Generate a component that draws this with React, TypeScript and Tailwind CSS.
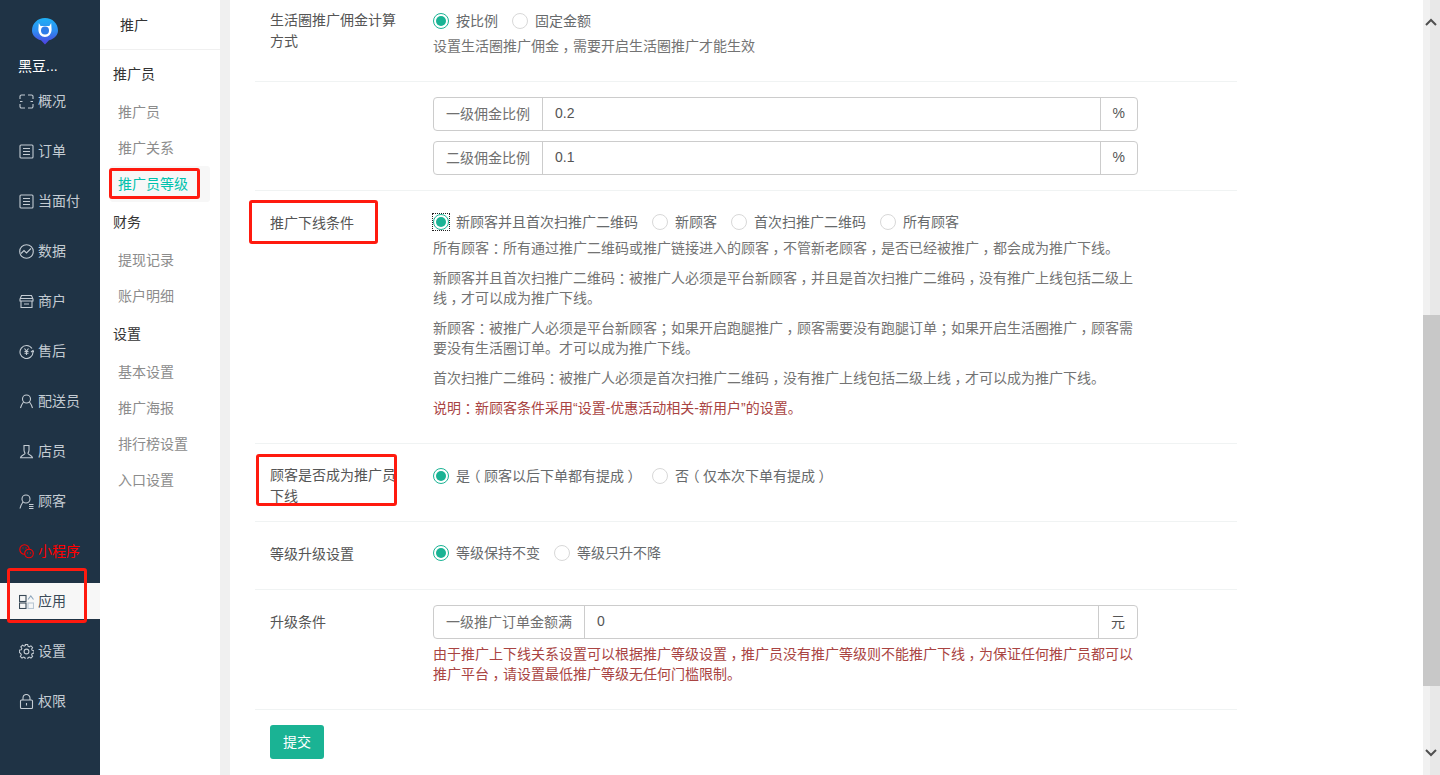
import React from "react";

const font = { fontFamily: '"Liberation Sans","Noto Sans CJK SC",sans-serif' };

// Full-width punctuation sits in the middle of its cell in the reference's font.
function P({ t }: { t: string }) {
  const parts = t.split(/([，：；（）])/);
  return (
    <>
      {parts.map((s, i) =>
        /^[，：；（）]$/.test(s) ? (
          <span key={i} className="inline-block w-[14px] text-center [font-feature-settings:'halt']">{s}</span>
        ) : (
          <React.Fragment key={i}>{s}</React.Fragment>
        )
      )}
    </>
  );
}

type IconProps = { c?: string };
const Svg = ({ children, c = "currentColor" }: { children: React.ReactNode; c?: string }) => (
  <svg width="15" height="15" viewBox="0 0 15 15" fill="none" stroke={c} strokeWidth="1.1" className="shrink-0">
    {children}
  </svg>
);
const icons: Record<string, (p: IconProps) => React.ReactElement> = {
  overview: (p) => (
    <Svg {...p}>
      <path d="M1 5V2.500A1.500 1.500 0 0 1 2.500 1H6M9 1h3.500A1.500 1.500 0 0 1 14 2.500V5M1 10v2.500A1.500 1.500 0 0 0 2.500 14H6M9 14h3.500a1.500 1.500 0 0 0 1.500-1.500V10M1 7.500h2.500M11.500 7.500H14" />
    </Svg>
  ),
  order: (p) => (
    <Svg {...p}>
      <rect x="1" y="1" width="13" height="13" rx="1" />
      <path d="M4 4.500h7M4 7.500h7M4 10.500h7" />
    </Svg>
  ),
  data: (p) => (
    <Svg {...p}>
      <circle cx="7.500" cy="7.500" r="6.800" />
      <path d="M2 9.500l3-3 2.500 2.500L12 4.500" />
    </Svg>
  ),
  shop: (p) => (
    <Svg {...p}>
      <path d="M2.500 1.500h10L14 5v2H1V5zM2 7v6.500h11V7M1 4.500h13M5 10h5" />
    </Svg>
  ),
  after: (p) => (
    <Svg {...p}>
      <path d="M13 4.500A6.500 6.500 0 1 0 14 7.500M12 8l2-1.500L15 8" />
      <path d="M5.500 4.500l2 2.500 2-2.500M7.500 7v4M5.500 7.500h4M5.500 9.300h4" />
    </Svg>
  ),
  courier: (p) => (
    <Svg {...p}>
      <circle cx="7.500" cy="5" r="4" />
      <path d="M4.500 8C3 10 2 12 1.500 14M10.500 8c1.500 2 2.500 4 3 6" />
    </Svg>
  ),
  staff: (p) => (
    <Svg {...p}>
      <path d="M5 1.500h5v4.500C10 8 9 8.500 9 9.500S13.500 11.500 13.500 13.800H1.500C1.500 11.500 6 10.500 6 9.500S5 8 5 6z" />
    </Svg>
  ),
  customer: (p) => (
    <Svg {...p}>
      <circle cx="7" cy="5" r="4" />
      <path d="M4 8C2.500 10 1.500 12 1 14.500M10 10.500h4.500M10 12.500h4.500M10 14.500h4.500" />
    </Svg>
  ),
  mini: (p) => (
    <Svg {...p}>
      <circle cx="5.500" cy="5.500" r="4.700" />
      <circle cx="10" cy="9.500" r="4.300" fill="#1f3345" />
      <path d="M3.500 4h1M6.500 4h1M8.500 8.500v1M11.500 8.500v1" />
    </Svg>
  ),
  app: (p) => (
    <Svg {...p}>
      <rect x=".5" y="1.500" width="6.500" height="6" />
      <rect x=".5" y="9" width="6.500" height="5.500" />
      <rect x="9" y="9" width="5.500" height="5.500" stroke="#b9c7d4" />
      <path d="M9 5.500l2.800-3.500 2.700 3.500" stroke="#8ea6bc" />
    </Svg>
  ),
  setting: (p) => (
    <Svg {...p}>
      <circle cx="7.500" cy="7.500" r="2.400" />
      <path d="M6.300 .8h2.400l.4 1.900 1.300.6 1.700-1 1.700 1.700-1 1.700.6 1.300 1.900.4v2.400l-1.900.4-.6 1.300 1 1.700-1.700 1.700-1.700-1-1.300.6-.4 1.900H6.300l-.4-1.900-1.300-.6-1.700 1-1.700-1.700 1-1.700-.6-1.300L.2 9V6.700l1.900-.4.6-1.300-1-1.700 1.700-1.700 1.700 1 1.300-.6z" transform="translate(.2 -.4) scale(.97)" />
    </Svg>
  ),
  lock: (p) => (
    <Svg {...p}>
      <rect x="1.500" y="6" width="12" height="8.500" rx="1" />
      <path d="M4 6V4a3.500 3.500 0 0 1 7 0v2M7.500 9v2.500" />
    </Svg>
  ),
};

const nav = [
  ["overview", "概况"],
  ["order", "订单"],
  ["order", "当面付"],
  ["data", "数据"],
  ["shop", "商户"],
  ["after", "售后"],
  ["courier", "配送员"],
  ["staff", "店员"],
  ["customer", "顾客"],
  ["mini", "小程序"],
  ["app", "应用"],
  ["setting", "设置"],
  ["lock", "权限"],
];

const subnav: [string, string[]][] = [
  ["推广员", ["推广员", "推广关系", "推广员等级"]],
  ["财务", ["提现记录", "账户明细"]],
  ["设置", ["基本设置", "推广海报", "排行榜设置", "入口设置"]],
];

function Logo() {
  return (
    <svg width="26" height="27" viewBox="0 0 26 27">
      <defs>
        <linearGradient id="lg" x1="0" y1="0" x2="0" y2="1">
          <stop offset="0" stopColor="#1fb0f5" />
          <stop offset="0.5" stopColor="#2f8bf0" />
          <stop offset="1" stopColor="#4f3fe0" />
        </linearGradient>
      </defs>
      <path d="M13 26.500l-4-4.200C3.500 20.800 0 17 0 12.500 0 5.500 5.500 0 13 0s13 5.500 13 12.500c0 4.500-3.500 8.300-9 9.800z" fill="url(#lg)" />
      <path d="M6.800 5l1.800 3h8.800l1.800-3 .4 6.500c0 4.500-3 7.500-6.600 7.500S6.400 16 6.400 11.500z" fill="#ffffff" />
      <circle cx="13" cy="12.500" r="4" fill="#2f7ce8" />
    </svg>
  );
}

function Sidebar() {
  return (
    <div className="w-[100px] shrink-0 bg-[#1f3345] text-[#c4ccd3] text-[14px]">
      <div className="h-[83px] pt-[18px] pl-[18px]">
        <div className="pl-[14px] h-[27px]">
          <Logo />
        </div>
        <div className="mt-[11px] text-[#ffffff] leading-[20px]">黑豆...</div>
      </div>
      {nav.map(([ic, label]) => {
        const I = icons[ic];
        const active = label === "应用";
        const red = label === "小程序";
        return (
          <div
            key={label}
            className={
              "h-[36px] mb-[14px] flex items-center gap-[4px] pl-[19px] " +
              (active ? "bg-[#f7f7f7] text-[#3a4a58]" : red ? "text-[#ff0000]" : "")
            }
          >
            <I />
            <span>{label}</span>
          </div>
        );
      })}
    </div>
  );
}

function SubNav() {
  return (
    <div className="w-[120px] shrink-0 bg-white text-[14px]">
      <div className="h-[50px] border-b border-[#f0f0f0] pl-[20px] leading-[50px] text-[#333333]">推广</div>
      <div className="pt-[6px]">
        {subnav.map(([g, items]) => (
          <div key={g} className="mb-[2px]">
            <div className="h-[36px] pl-[13px] leading-[36px] text-[#333333]">{g}</div>
            <div className="pt-[2px]">
              {items.map((it) => {
                const active = it === "推广员等级";
                return (
                  <div
                    key={it}
                    className={
                      "h-[36px] ml-[10px] w-[100px] rounded-[3px] pl-[8px] leading-[36px] " +
                      (active ? "bg-[#f7f7f7] text-[#00c2ad]" : "text-[#8c8c8c]")
                    }
                  >
                    {it}
                  </div>
                );
              })}
            </div>
          </div>
        ))}
      </div>
    </div>
  );
}

function Radio({ label, checked, focus }: { label: string; checked?: boolean; focus?: boolean }) {
  return (
    <span className="inline-flex items-center gap-[7px] mr-[14px] h-[22px] whitespace-nowrap">
      <span className={"relative w-[16px] h-[16px] shrink-0 " + (focus ? "outline-1 outline-dotted outline-[#222222]" : "")}>
        <span
          className={
            "flex items-center justify-center w-[16px] h-[16px] rounded-full border " +
            (checked ? "border-[#1ab394]" : "border-[#d8d8d8]")
          }
        >
          {checked && <span className="w-[10px] h-[10px] rounded-full bg-[#1ab394]" />}
        </span>
      </span>
      <span>
        <P t={label} />
      </span>
    </span>
  );
}

function Row({
  label,
  pt,
  pb,
  labelPt,
  children,
}: {
  label?: string;
  pt: string;
  pb: string;
  labelPt: string;
  children: React.ReactNode;
}) {
  return (
    <div className={"flex pl-[15px] border-b border-[#f0f3f3] " + pt + " " + pb}>
      <div className={"w-[163px] shrink-0 pr-[30px] leading-[21px] text-[#555555] " + labelPt}>{label}</div>
      <div className="w-[705px] text-[#676a6c]">{children}</div>
    </div>
  );
}

function InputGroup({ left, value, right, cls }: { left: string; value: string; right: string; cls?: string }) {
  return (
    <div className={"flex h-[34px] border border-[#cccccc] rounded-[4px] leading-[32px] text-[#676a6c] " + (cls || "")}>
      <div className="px-[12px] border-r border-[#cccccc] text-[#707070] shrink-0">{left}</div>
      <div className="flex-1 pl-[12px] text-[#555555] leading-[30px]">{value}</div>
      <div className={"px-[12px] border-l border-[#cccccc] text-[#555555] shrink-0 " + (right === "%" ? "leading-[30px]" : "")}>{right}</div>
    </div>
  );
}

const Hint = ({ t, red, cls }: { t: string; red?: boolean; cls?: string }) => (
  <div className={"leading-[20px] " + (red ? "text-[#a94442] " : "text-[#737373] ") + (cls || "")}>
    <P t={t} />
  </div>
);

function Form() {
  return (
    <div className="flex-1 bg-white text-[14px] overflow-hidden">
      <div className="ml-[25px] w-[982px]">
        <Row label="生活圈推广佣金计算方式" pt="pt-[10px]" pb="pb-[25px]" labelPt="">
          <div className="h-[22px] flex">
            <Radio label="按比例" checked />
            <Radio label="固定金额" />
          </div>
          <Hint cls="mt-[4px]" t="设置生活圈推广佣金，需要开启生活圈推广才能生效" />
        </Row>
        <Row pt="pt-[15px]" pb="pb-[15px]" labelPt="">
          <InputGroup left="一级佣金比例" value="0.2" right="%" cls="mb-[10px]" />
          <InputGroup left="二级佣金比例" value="0.1" right="%" />
        </Row>
        <Row label="推广下线条件" pt="pt-[20px]" pb="pb-[25px]" labelPt="pt-[2px]">
          <div className="h-[22px] flex">
            <Radio label="新顾客并且首次扫推广二维码" checked focus />
            <Radio label="新顾客" />
            <Radio label="首次扫推广二维码" />
            <Radio label="所有顾客" />
          </div>
          <Hint cls="mt-[5px]" t="所有顾客：所有通过推广二维码或推广链接进入的顾客，不管新老顾客，是否已经被推广，都会成为推广下线。" />
          <Hint cls="mt-[10px]" t="新顾客并且首次扫推广二维码：被推广人必须是平台新顾客，并且是首次扫推广二维码，没有推广上线包括二级上线，才可以成为推广下线。" />
          <Hint cls="mt-[10px]" t="新顾客：被推广人必须是平台新顾客；如果开启跑腿推广，顾客需要没有跑腿订单；如果开启生活圈推广，顾客需要没有生活圈订单。才可以成为推广下线。" />
          <Hint cls="mt-[10px]" t="首次扫推广二维码：被推广人必须是首次扫推广二维码，没有推广上线包括二级上线，才可以成为推广下线。" />
          <Hint red cls="mt-[10px]" t="说明：新顾客条件采用“设置-优惠活动相关-新用户”的设置。" />
        </Row>
        <Row label="顾客是否成为推广员下线" pt="pt-[21px]" pb="pb-[14px]" labelPt="">
          <div className="h-[22px] flex">
            <Radio label="是（顾客以后下单都有提成）" checked />
            <Radio label="否（仅本次下单有提成）" />
          </div>
        </Row>
        <Row label="等级升级设置" pt="pt-[20px]" pb="pb-[24px]" labelPt="pt-[2px]">
          <div className="h-[22px] flex">
            <Radio label="等级保持不变" checked />
            <Radio label="等级只升不降" />
          </div>
        </Row>
        <Row label="升级条件" pt="pt-[15px]" pb="pb-[25px]" labelPt="pt-[7px]">
          <InputGroup left="一级推广订单金额满" value="0" right="元" />
          <Hint red cls="mt-[5px]" t="由于推广上下线关系设置可以根据推广等级设置，推广员没有推广等级则不能推广下线，为保证任何推广员都可以推广平台，请设置最低推广等级无任何门槛限制。" />
        </Row>
        <div className="pt-[15px] pl-[15px]">
          <button className="w-[54px] h-[34px] rounded-[3px] bg-[#1ab394] text-white">提交</button>
        </div>
      </div>
    </div>
  );
}

function Scrollbar() {
  return (
    <div className="relative w-[17px] shrink-0 h-full flex">
      <div className="w-[7px] bg-[#f1f1f1]" />
      <div className="w-[10px] bg-[#e8e8e8]" />
      <div className="absolute left-0 right-0 top-[315px] h-[371px] bg-[#c8c8c8]" />
      <svg className="absolute left-[2px] top-[17px]" width="12" height="10" viewBox="0 0 12 10" fill="none" stroke="#505050" strokeWidth="2">
        <path d="M1 8l5-5 5 5" />
      </svg>
      <svg className="absolute left-[2px] top-[748px]" width="12" height="10" viewBox="0 0 12 10" fill="none" stroke="#505050" strokeWidth="2">
        <path d="M1 2l5 5 5-5" />
      </svg>
    </div>
  );
}

const RedBox = ({ cls }: { cls: string }) => (
  <div className={"absolute border-[3px] border-[#ff1a0f] rounded-[3px] pointer-events-none " + cls} />
);

export default function App() {
  return (
    <div className="relative flex w-[1440px] h-[775px] overflow-hidden bg-white" style={font}>
      <Sidebar />
      <SubNav />
      <div className="w-[10px] shrink-0 bg-[#f0f0f0]" />
      <Form />
      <Scrollbar />
      <RedBox cls="left-[7px] top-[568px] w-[80px] h-[55px]" />
      <RedBox cls="left-[109px] top-[168px] w-[91px] h-[31px]" />
      <RedBox cls="left-[249px] top-[200px] w-[129px] h-[44px]" />
      <RedBox cls="left-[256px] top-[454px] w-[141px] h-[52px]" />
    </div>
  );
}
